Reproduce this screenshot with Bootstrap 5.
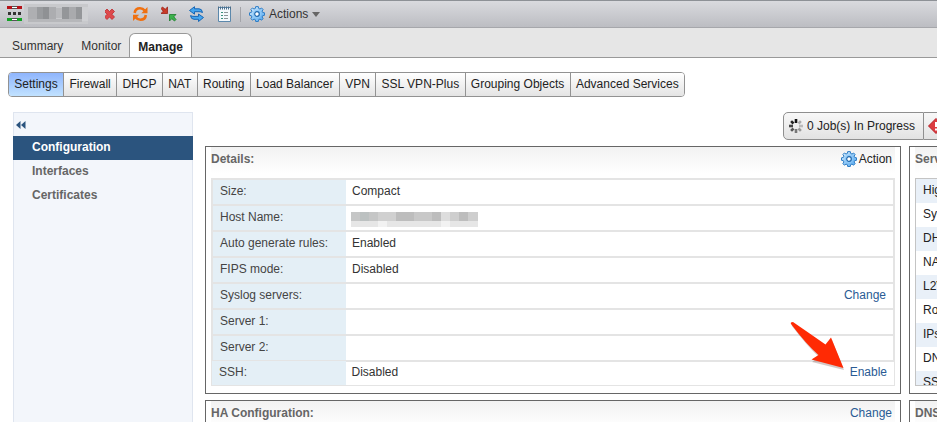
<!DOCTYPE html>
<html lang="en">
<head>
<meta charset="utf-8">
<meta name="viewport" content="width=device-width, initial-scale=1">
<title>Edge – Manage</title>
<link href="https://cdn.jsdelivr.net/npm/bootstrap@5.3.0/dist/css/bootstrap.min.css" rel="stylesheet">
<style>
  body { font: 12px/16px "Liberation Sans", Arial, sans-serif; color: #333; background: #fff; }
  a { color: #2a5b94; text-decoration: none; }
  svg { display: block; flex: none; }
  button { font: inherit; color: inherit; }
  .toolbar { height: 28px; padding-left: 7px; background: linear-gradient(#d9dade, #bcbdc2); border-top: 1px solid #8d9196; border-bottom: 1px solid #a6a7ab; }
  .tool { border: 0; padding: 0; background: none; width: 16px; height: 16px; margin-right: 12px; }
  .divider { width: 1px; height: 15px; background: #a3a4a9; margin: 0 8px 0 -5px; }
  .view-tabs { height: 30px; padding: 5px 0 0 2px; background: #e6e6e6; border-bottom: 1px solid #999; }
  .view-tabs .nav-link { color: #333; padding: 4px 7px 4px 9px; border: 1px solid transparent; border-bottom: 0; border-radius: 6px 6px 0 0; margin: 0; }
  .view-tabs .nav-link.active { color: #222; font-weight: bold; background: #fff; border-color: #999; padding: 5px 8px 4px; }
  .sections { width: 677px; max-width: 100%; margin: 14px 0 15px 8px; border: 1px solid #929292; border-radius: 4px; overflow: hidden; }
  .sections a { flex: 1 1 auto; text-align: center; color: #222; height: 23px; line-height: 22px; background: linear-gradient(#fff, #e4e4e4); border-right: 1px solid #929292; white-space: nowrap; }
  .sections a:last-child { border-right: 0; }
  .sections a.active { background: linear-gradient(#8fb5fd, #c1e2ff); }
  .workspace { padding-left: 13px; gap: 12px; min-height: 0; }
  .side { width: 180px; flex: none; background: #f3f6fb; border: 1px solid #dfe5ef; border-bottom: 0; }
  .side button { border: 0; background: none; height: 23px; padding: 0 2px; }
  .side .nav-link { margin: 0 -1px; padding: 3px 0 5px 19px; height: 24px; color: #666; font-weight: bold; }
  .side .nav-link.active { background: #2b547e; color: #fff; }
  .jobs button { height: 28px; border: 1px solid #8f8f8f; background: linear-gradient(#f8f8f8, #e2e2e2); color: #222; white-space: nowrap; }
  .jobs .progress-btn { width: 141px; border-radius: 5px 0 0 5px; padding: 0 4px; gap: 3px; }
  .jobs .alert-btn { width: 13px; border-left: 0; border-right: 0; padding: 0 4px; overflow: hidden; }
  .boxes { padding-top: 6px; display: grid; grid-template-columns: minmax(0, 1fr) 28px; gap: 6px 8px; }
  .box { border: 1px solid #666; padding: 0 5px 7px; min-width: 0; background: #fff; }
  .boxes .cut { border-right: 0; padding-right: 0; overflow: hidden; white-space: nowrap; }
  .box-head { height: 31px; padding-top: 4px; background: linear-gradient(#f2f2f2, #fff 26px); color: #666; }
  .box-head h2 { font: bold 12px/16px "Liberation Sans", Arial, sans-serif; margin: 0; }
  .box-head a { padding-right: 3px; }
  .box-head button { border: 0; padding: 0 3px 0 0; background: none; color: #222; gap: 2px; }
  .facts { width: 100%; border-collapse: collapse; table-layout: fixed; }
  .facts th, .facts td { height: 26px; padding: 0 7px 2px 6px; border: 2px solid #e4e4e4; border-width: 2px 0; vertical-align: middle; }
  .facts th { width: 134px; padding-left: 7px; padding-right: 0; font-weight: normal; color: #444; background: #e4eff6; border-left-width: 2px; }
  .facts td:last-child { border-right-width: 2px; }
  .facts.thin { margin-top: -2px; }
  .facts.thin th, .facts.thin td { height: 25px; border-width: 1px 0; padding-bottom: 3px; }
  .facts.thin th { border-left-width: 1px; }
  .facts.thin td:last-child { border-right-width: 1px; }
  .pointer { position: absolute; right: 50px; bottom: 18px; }
  .mosaic { margin-left: -1px; }
  .services { height: 208px; overflow: hidden; border: 1px solid #c4c4c4; border-right: 0; }
  .services li { height: 24px; line-height: 22px; padding-left: 7px; color: #222; }
  .services li:nth-child(odd) { background: #e9f0f8; }
</style>
</head>
<body class="vh-100 overflow-hidden d-flex flex-column">
<svg width="0" height="0" class="position-absolute">
  <defs>
    <linearGradient id="blue" x1="0" y1="0" x2="1" y2="1"><stop offset="0" stop-color="#d9efff"/><stop offset="1" stop-color="#4ba3ee"/></linearGradient>
    <symbol id="gear" viewBox="0 0 16 16">
      <path d="M6.700 .6h2.600l.4 1.900 1.300.5 1.600-1 1.500 1.500-1 1.600.5 1.300 1.900.4v2.500l-1.900.4-.5 1.300 1 1.600-1.500 1.600-1.600-1.100-1.300.5-.4 1.900H6.700l-.4-1.900-1.300-.5-1.600 1.100-1.500-1.600 1-1.600-.5-1.300-1.900-.4V6.800l1.900-.4.5-1.300-1-1.600L3.400 2l1.600 1 1.300-.5z" fill="url(#blue)" stroke="#2f7ec6" stroke-width="1" stroke-linejoin="round"/>
      <circle cx="8" cy="8" r="3.700" fill="none" stroke="#8cc8f8" stroke-width="1"/>
      <circle cx="8" cy="8" r="2.300" fill="#fff" stroke="#2068ad" stroke-width="1.200"/>
    </symbol>
  </defs>
</svg>

<header class="toolbar d-flex align-items-center flex-shrink-0">
  <svg width="16" height="18" viewBox="0 0 16 18" aria-hidden="true">
    <path d="M0 1h15v3H0z" fill="#b51218"/><path d="M5 1h5v3H5z" fill="#555"/><path d="M5 2h5v1H5z" fill="#fff"/>
    <path d="M1 7h3v3H1zM6 7h3v3H6zM11 7h3v3h-3z" fill="#333"/>
    <path d="M0 13h15v3H0z" fill="#12a324"/><path d="M5 13h5v3H5z" fill="#555"/><path d="M5 14h5v1H5z" fill="#fff"/>
  </svg>
  <svg width="66" height="20" viewBox="0 0 66 20" class="me-3" shape-rendering="crispEdges" aria-hidden="true">
    <path d="M1 0h64v20H1z" fill="#c8c9cc"/><path d="M5 3h10v12H5z" fill="#aeafb2"/><path d="M14 3h6v12h-6z" fill="#999b9e"/><path d="M20 3h6v12h-6z" fill="#8f9194"/><path d="M26 3h7v12h-7z" fill="#acadb0"/><path d="M33 4h6v10h-6z" fill="#b9babd"/><path d="M39 3h7v12h-7z" fill="#949699"/><path d="M46 3h7v12h-7z" fill="#a9aaad"/><path d="M53 3h6v12h-6z" fill="#949699"/><path d="M5 15h54v3H5z" fill="#b6b7ba"/><path d="M59 3h6v14h-6z" fill="#cfd0d3"/>
  </svg>
  <button class="tool ms-n1" type="button" aria-label="Delete"><svg width="16" height="16" viewBox="0 0 16 16"><path d="M-1 5.500L1.500 3 4 5.600 6.500 3 9 5.500 6.400 8.200 9 11 6.500 13.500 4 10.900 1.500 13.500-1 11l2.600-2.800z" transform="translate(.5)" fill="#de4a4c" stroke="#bd2b30" stroke-width=".8"/></svg></button>
  <button class="tool" type="button" aria-label="Refresh"><svg width="16" height="16" viewBox="0 0 16 16"><path d="M1.700 7C2 4 4 2.300 7 2.300c2 0 3.500.7 4.600 2.200M12.800 9c-.3 3-2.300 4.700-5.300 4.700-2 0-3.500-.7-4.600-2.200" fill="none" stroke="#f0700f" stroke-width="2.600"/><path d="M14.500 1v6.200H8.300zM0 15V8.800h6.200z" fill="#f0700f"/></svg></button>
  <button class="tool" type="button" aria-label="Redeploy"><svg width="16" height="16" viewBox="0 0 16 16"><path d="M0 2.500L1.500 1l2.700 2.300L6.500 1v6.500H0l2.200-2.300z" fill="#c93a28" stroke="#9c2218" stroke-width=".8"/><path d="M15 13.500L13.500 15l-2.700-2.300L8.500 15V8.500H15l-2.200 2.300z" fill="#3cb24c" stroke="#1c7c2b" stroke-width=".8"/></svg></button>
  <button class="tool" type="button" aria-label="Synchronize"><svg width="16" height="16" viewBox="0 0 16 16"><path d="M.5 4.500L5.500.7v2.100H10q3 0 3.500 3.700-1.500-.8-3.500-.8H5.500v2.500zM14.500 11.500l-5 4v-2.200H5q-3 0-3.500-3.700 1.500.8 3.500.8h4.500V8z" fill="#45a6ef" stroke="#1766b5" stroke-width="1"/></svg></button>
  <button class="tool" type="button" aria-label="Logs"><svg width="16" height="16" viewBox="0 0 16 16"><path d="M1.500 1.500h12v14h-12z" fill="#f3f8fc" stroke="#5b88ac"/><path d="M1 2h13" stroke="#4c6e8a" stroke-width="3" stroke-dasharray="1 1"/><path d="M4 6.500h2M4 9.500h2M4 12.500h2" stroke="#398f7d"/><path d="M7 6.500h4M7 9.500h4M7 12.500h4" stroke="#8b9499"/></svg></button>
  <span class="divider"></span>
  <button class="d-flex align-items-center border-0 bg-transparent p-0" type="button"><svg width="16" height="16"><use href="#gear"/></svg><span class="px-1">Actions</span><svg width="8" height="5" viewBox="0 0 8 5"><path d="M0 0h8L4 5z" fill="#666"/></svg></button>
</header>

<nav class="view-tabs nav flex-nowrap flex-shrink-0">
  <a class="nav-link" href="#">Summary</a>
  <a class="nav-link" href="#">Monitor</a>
  <a class="nav-link active" href="#" aria-current="page">Manage</a>
</nav>

<nav class="sections d-flex flex-shrink-0">
  <a class="active" href="#">Settings</a><a href="#">Firewall</a><a href="#">DHCP</a><a href="#">NAT</a><a href="#">Routing</a><a href="#">Load Balancer</a><a href="#">VPN</a><a href="#">SSL VPN-Plus</a><a href="#">Grouping Objects</a><a href="#">Advanced Services</a>
</nav>

<div class="workspace d-flex flex-grow-1">
  <aside class="side">
    <button class="d-flex align-items-center" type="button" aria-label="Collapse"><svg width="10" height="8" viewBox="0 0 10 8"><path d="M4.500 0v8L0 4zM9.500 0v8L5 4z" fill="#2b547e"/></svg></button>
    <nav class="nav flex-column">
      <a class="nav-link active" href="#">Configuration</a>
      <a class="nav-link" href="#">Interfaces</a>
      <a class="nav-link" href="#">Certificates</a>
    </nav>
  </aside>

  <main class="flex-grow-1">
    <div class="jobs d-flex justify-content-end">
      <button class="progress-btn d-flex align-items-center" type="button">
        <svg width="16" height="16" viewBox="0 0 16 16" fill="none" stroke-width="2.600"><path d="M8 1v4" stroke="#111"/><path d="M12.900 3.100l-2.400 2.400" stroke="#aaa"/><path d="M15 8h-4" stroke="#bbb"/><path d="M12.900 12.900l-2.400-2.400" stroke="#999"/><path d="M8 15v-4" stroke="#777"/><path d="M3.100 12.900l2.400-2.400" stroke="#555"/><path d="M1 8h4" stroke="#444"/><path d="M3.100 3.100l2.400 2.400" stroke="#222"/></svg>
        <span>0 Job(s) In Progress</span>
      </button>
      <button class="alert-btn" type="button" aria-label="Failed jobs"><svg width="16" height="16" viewBox="0 0 16 16"><path d="M8 .5L15.500 8 8 15.500.5 8z" fill="#dc3c40" stroke="#b51f25"/><path d="M7 4h2v5H7zM7 10.500h2v2H7z" fill="#fff"/></svg></button>
    </div>

    <div class="boxes">
      <section class="box position-relative">
        <div class="box-head d-flex justify-content-between align-items-start">
          <h2>Details:</h2>
          <button class="d-flex align-items-center" type="button"><svg width="16" height="16"><use href="#gear"/></svg>Action</button>
        </div>
        <table class="facts">
          <tr><th scope="row">Size:</th><td>Compact</td><td></td></tr>
          <tr><th scope="row">Host Name:</th><td class="py-0"><svg width="159" height="20" viewBox="0 0 159 20" shape-rendering="crispEdges" class="mosaic" aria-label="Hidden host name" role="img">
            <path d="M0 4h27v9H0z" fill="#c5c6c6"/><path d="M9 4h9v9H9z" fill="#bcc1c1"/><path d="M27 4h18v9H27z" fill="#d0d0d0"/><path d="M45 4h18v9H45z" fill="#bdbdbd"/><path d="M63 4h18v9H63z" fill="#c8c8c8"/><path d="M81 4h9v9h-9zM108 4h9v9h-9z" fill="#bdbdbd"/><path d="M90 4h9v9h-9z" fill="#ddd"/><path d="M99 4h9v9h-9zM117 4h10v9h-10z" fill="#cecece"/><path d="M0 13h127v6H0z" fill="#e6e6e6"/><path d="M27 13h9v6h-9zM90 13h9v6h-9z" fill="#f2f2f2"/></svg></td><td></td></tr>
          <tr><th scope="row">Auto generate rules:</th><td>Enabled</td><td></td></tr>
          <tr><th scope="row">FIPS mode:</th><td>Disabled</td><td></td></tr>
          <tr><th scope="row">Syslog servers:</th><td></td><td class="text-end"><a href="#">Change</a></td></tr>
          <tr><th scope="row">Server 1:</th><td></td><td></td></tr>
          <tr><th scope="row">Server 2:</th><td></td><td></td></tr>
        </table>
        <table class="facts thin">
          <tr><th scope="row">SSH:</th><td>Disabled</td><td class="text-end"><a href="#">Enable</a></td></tr>
        </table>
        <svg class="pointer" width="60" height="54" viewBox="0 0 60 54" aria-hidden="true"><path id="arrow-shade" d="M2 5Q1 3 4 3Q20 14 36 25L42 19 54 49 22 41l7-5Q17 25 2 5z" fill="#55221a" opacity=".25"/><path d="M1 3Q0 1 3 1Q19 12 35.500 23.500L41 16.500 53.500 47 21.500 38.500l7-4.500Q16 23 1 3z" fill="#ff2a04"/></svg>
      </section>

      <section class="box cut">
        <div class="box-head"><h2>Services:</h2></div>
        <ul class="services list-unstyled mb-0">
          <li>High Availability</li><li>Syslog</li><li>DHCP</li><li>NAT</li><li>L2VPN</li><li>Routing</li><li>IPsec VPN</li><li>DNS</li><li>SSL VPN</li>
        </ul>
      </section>

      <section class="box">
        <div class="box-head d-flex justify-content-between align-items-start"><h2>HA Configuration:</h2><a href="#">Change</a></div>
      </section>
      <section class="box cut">
        <div class="box-head"><h2>DNS Configuration:</h2></div>
      </section>
    </div>
  </main>
</div>
<script src="https://cdn.jsdelivr.net/npm/bootstrap@5.3.0/dist/js/bootstrap.bundle.min.js"></script>
</body>
</html>
